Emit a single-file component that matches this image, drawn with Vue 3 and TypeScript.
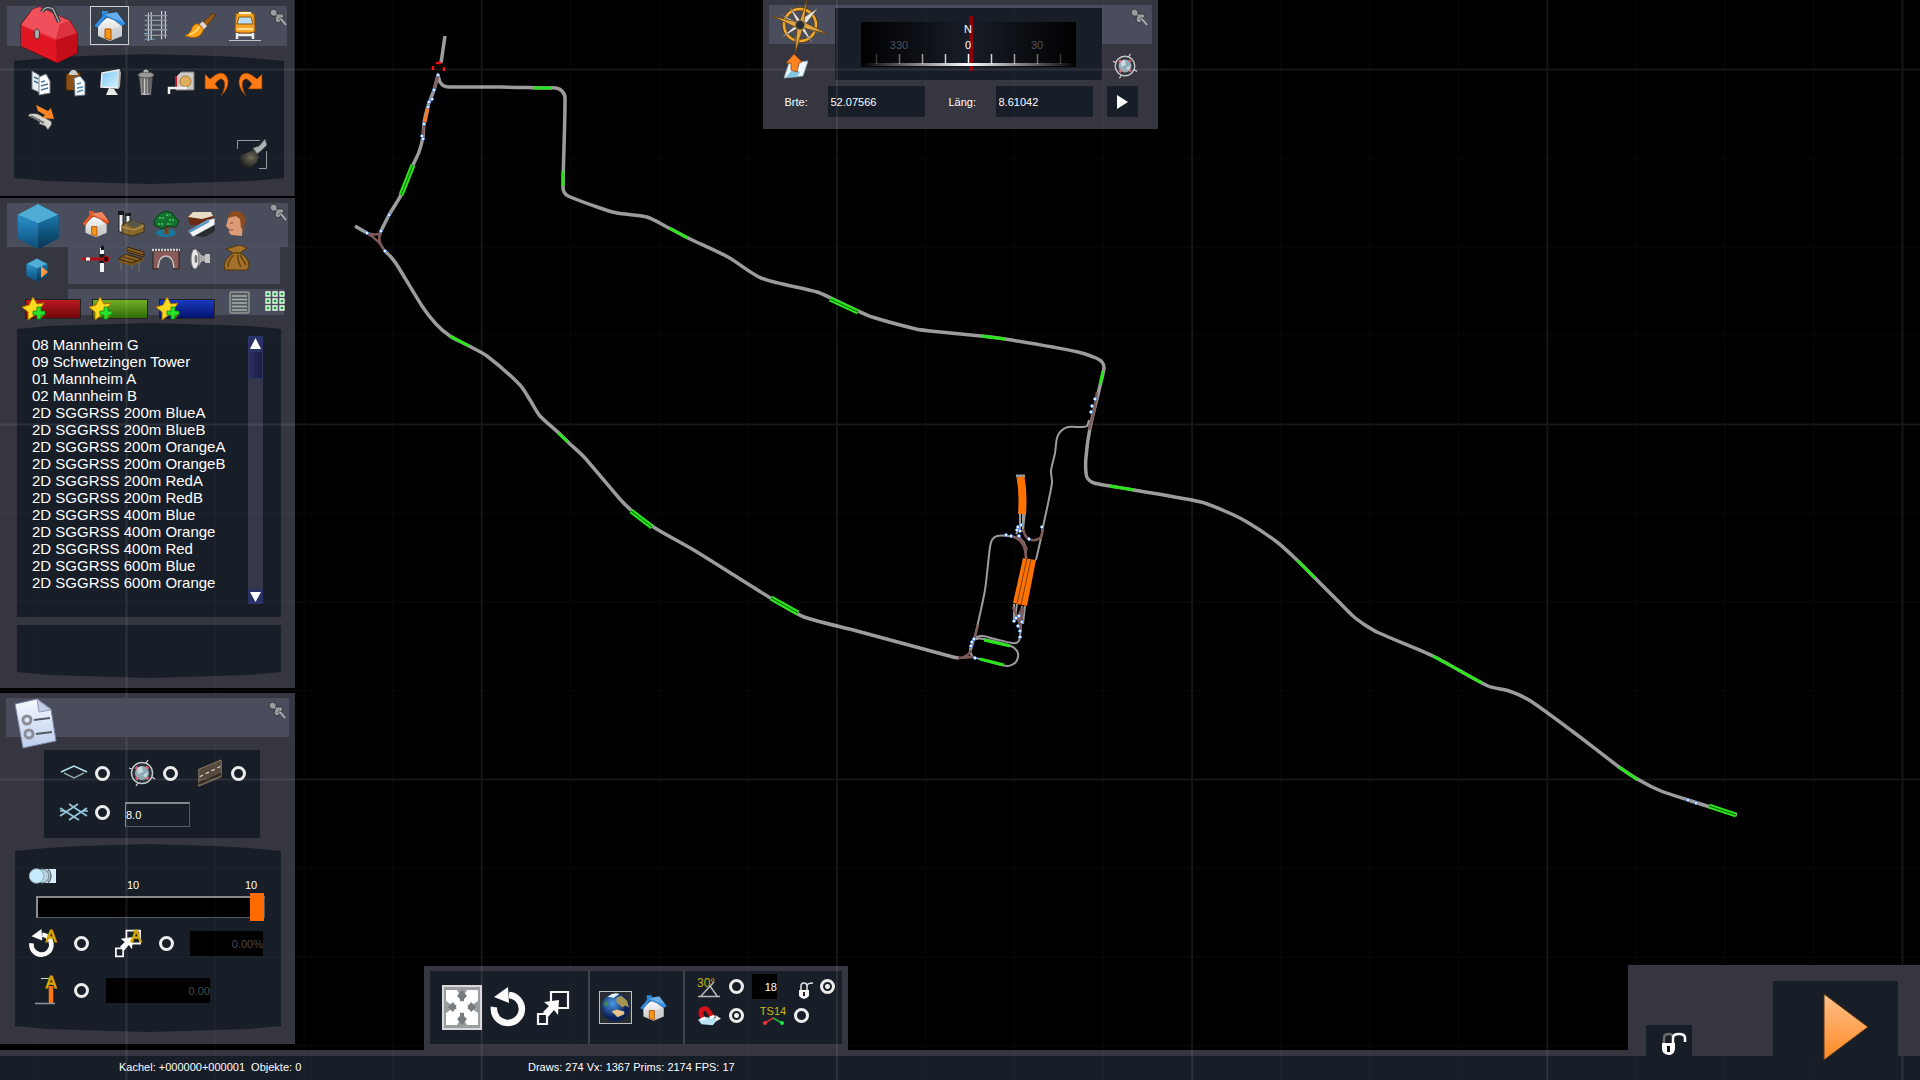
<script setup lang="ts">
import { ref } from 'vue'

type Point = [number, number]
type Tool = { icon: string; label: string; tint?: string }

const modes: Tool[] = [
  { icon: 'house', label: 'Objekte', tint: '#2f8fe6' },
  { icon: 'rails', label: 'Gleise' },
  { icon: 'brush', label: 'Landschaft' },
  { icon: 'train', label: 'Fahrzeuge' },
]

const actions: Tool[] = [
  { icon: 'copy', label: 'Kopieren' },
  { icon: 'paste', label: 'Einfügen' },
  { icon: 'monitor', label: 'Ansicht' },
  { icon: 'trash', label: 'Löschen' },
  { icon: 'tape', label: 'Messen' },
  { icon: 'undo', label: 'Rückgängig' },
  { icon: 'redo', label: 'Wiederholen' },
  { icon: 'shift', label: 'Verschieben' },
]

const categories: Tool[] = [
  { icon: 'house', label: 'Gebäude', tint: '#ea5a26' },
  { icon: 'factory', label: 'Industrie' },
  { icon: 'tree', label: 'Vegetation' },
  { icon: 'road-train', label: 'Verkehr' },
  { icon: 'head', label: 'Personen' },
  { icon: 'signal', label: 'Signale' },
  { icon: 'bench', label: 'Kleinteile' },
  { icon: 'bridge', label: 'Brücken' },
  { icon: 'speaker', label: 'Geräusche' },
  { icon: 'sack', label: 'Güter' },
]

const favourites = [
  { name: 'Rot', tone: 'red' },
  { name: 'Grün', tone: 'green' },
  { name: 'Blau', tone: 'blue' },
]

const objects: string[] = [
  '08 Mannheim G',
  '09 Schwetzingen Tower',
  '01 Mannheim A',
  '02 Mannheim B',
  '2D SGGRSS 200m BlueA',
  '2D SGGRSS 200m BlueB',
  '2D SGGRSS 200m OrangeA',
  '2D SGGRSS 200m OrangeB',
  '2D SGGRSS 200m RedA',
  '2D SGGRSS 200m RedB',
  '2D SGGRSS 400m Blue',
  '2D SGGRSS 400m Orange',
  '2D SGGRSS 400m Red',
  '2D SGGRSS 600m Blue',
  '2D SGGRSS 600m Orange',
]

const density = ref(10)
const latitude = ref('52.07566')
const longitude = ref('8.61042')
const tileSize = ref('8.0')
const scaleJitter = ref('0.00%')
const heightJitter = ref('0.00')
const snapAngle = ref('18')

const ticks = [15, 38, 61, 84, 107, 130, 153, 176, 199]

/* Catmull-Rom interpolation through the surveyed points of a line */
function smooth(p: Point[]): string {
  let d = `M${p[0][0]} ${p[0][1]}`
  for (let i = 0; i < p.length - 1; i++) {
    const a = p[Math.max(0, i - 1)]
    const b = p[i]
    const c = p[i + 1]
    const e = p[Math.min(p.length - 1, i + 2)]
    const len = Math.hypot(c[0] - b[0], c[1] - b[1])
    const l1 = Math.hypot(c[0] - a[0], c[1] - a[1]) || 1
    const l2 = Math.hypot(e[0] - b[0], e[1] - b[1]) || 1
    const k = len / 4
    d += `C${(b[0] + ((c[0] - a[0]) / l1) * k).toFixed(1)} ${(b[1] + ((c[1] - a[1]) / l1) * k).toFixed(1)} ${(c[0] - ((e[0] - b[0]) / l2) * k).toFixed(1)} ${(c[1] - ((e[1] - b[1]) / l2) * k).toFixed(1)} ${c[0]} ${c[1]}`
  }
  return d
}

const mainLines: string[] = [
  smooth([[445, 36], [441, 63]]),
  smooth([[438, 75], [440, 82], [444, 86], [450, 87], [500, 87], [545, 88], [556, 88], [562, 91], [565, 98], [563, 187], [564, 192], [568, 196], [600, 208], [617, 213], [647, 217], [669, 228], [688, 238], [728, 257], [761, 278], [817, 292], [831, 298], [858, 311], [872, 317], [916, 329], [930, 331], [981, 336], [1005, 339], [1078, 352], [1096, 358], [1102, 362], [1104, 368], [1100, 386], [1090, 428], [1086, 457], [1086, 473], [1088, 479], [1094, 483], [1110, 486], [1134, 490], [1201, 502], [1227, 512], [1247, 522], [1277, 542], [1297, 560], [1315, 578], [1340, 603], [1353, 616], [1365, 625], [1379, 633], [1433, 656], [1488, 686], [1509, 691], [1529, 700], [1572, 731], [1619, 767], [1639, 780], [1661, 791], [1688, 800], [1710, 807], [1737, 815]]),
  smooth([[438, 75], [434, 90], [428, 106], [424, 123], [423, 137], [419, 152], [413, 165], [401, 195], [389, 215], [380, 233]]),
  smooth([[355, 226], [367, 233]]),
  smooth([[385, 251], [391, 257], [397, 265], [422, 306], [436, 324], [450, 336], [469, 346], [487, 356], [520, 385], [530, 400], [540, 416], [560, 434], [569, 443], [584, 457], [619, 498], [631, 510], [655, 528], [692, 549], [729, 572], [777, 602], [804, 617], [857, 631], [953, 657], [959, 658]]),
]

const sideLines: string[] = [
  smooth([[1089, 420], [1087, 426], [1082, 427], [1068, 427], [1061, 431], [1057, 438], [1055, 453], [1051, 471], [1052, 483], [1043, 527], [1041, 538], [1036, 560]]),
  smooth([[1026, 558], [1025, 545], [1020, 539], [1008, 536], [997, 536], [992, 540], [990, 547], [985, 590], [978, 623], [974, 640], [971, 650]]),
  smooth([[1021, 624], [1020, 637], [1018, 642], [1012, 643], [995, 639], [983, 636], [977, 637], [971, 642]]),
  smooth([[971, 648], [972, 642], [976, 639], [984, 639], [1011, 646], [1017, 651], [1018, 657], [1015, 663], [1007, 666], [980, 659], [973, 657], [970, 650], [971, 646]]),
  'M1020 512V528L1016 534M1023 512V532M1025 512L1023 530',
  'M1014 604V620M1017 604L1015 618M1022 606L1020 622M1025 606L1023 624',
]

const switchLines: string[] = [
  'M438 76L434 90M424 123L423 137',
  'M367 233Q376 236 381 233M368 234Q379 240 385 251M381 233Q376 240 385 251',
  'M1097 392L1094 412L1089 430',
  smooth([[1043, 528], [1041, 537], [1035, 540], [1029, 539], [1025, 535], [1023, 529]]),
  'M1010 536Q1025 538 1026 557M1017 535Q1023 541 1027 550',
  'M1013 607L1020 624M1023 607L1016 620M1023 608L1020 630',
  'M978 625L974 640M971 650Q968 658 958 658M958 658L973 657',
]

const platforms: string[] = [
  'M533 88H552M563 171V186',
  'M669 228L688 238M981 336L1005 339M1103 371L1100 385',
  'M1110 486L1134 490M1297 560L1315 578M1433 656L1482 683M1619 767L1638 780',
  'M450 336L469 346M558 433L568 442',
  'M984 640L1010 646M980 659L1004 665',
]

/* Passing loops: two parallel platform tracks */
const loops: string[] = ['M413 165L401 195', 'M830 299L858 312', 'M1709 806L1736 815', 'M631 511L652 527', 'M771 598L798 613']

const nodes: Point[] = [
  [438, 75], [434, 90], [432, 99], [429, 102], [428, 107], [424, 124], [422, 136], [423, 139], [389, 215], [381, 231], [367, 233], [385, 251],
  [1095, 399], [1092, 406], [1091, 412], [1042, 527], [1029, 539], [1006, 535], [1011, 536], [1018, 527], [1021, 525], [1017, 530], [1020, 531], [1019, 536],
  [1014, 621], [1016, 618], [1019, 616], [1022, 622], [1018, 626], [1020, 631], [1020, 637], [974, 639], [972, 642], [971, 646], [975, 658], [1688, 800], [1696, 803],
]

function gridPath(first: number, last: number, step: number, vertical: boolean): string {
  let d = ''
  for (let v = first; v < last; v += step) d += vertical ? `M${v} 0V1080` : `M0 ${v}H1920`
  return d
}
const majorGrid = gridPath(126.5, 1920, 355.2, true) + gridPath(69.5, 1080, 355, false)
const minorGrid = gridPath(37.7, 1920, 88.8, true) + gridPath(69.5, 1080, 88.75, false)
</script>

<template>
  <svg class="sprite" aria-hidden="true">
    <defs>
      <linearGradient id="g-red" x1="0" y1="0" x2="1" y2="1"><stop offset="0" stop-color="#ff5a66" /><stop offset="1" stop-color="#c20611" /></linearGradient>
      <linearGradient id="g-cube-l" x1="0" y1="0" x2="0" y2="1"><stop offset="0" stop-color="#2a92cc" /><stop offset="1" stop-color="#0c4c78" /></linearGradient>
      <linearGradient id="g-cube-r" x1="0" y1="0" x2="0" y2="1"><stop offset="0" stop-color="#1a78ae" /><stop offset="1" stop-color="#06324f" /></linearGradient>
      <linearGradient id="g-wall" x1="0" y1="0" x2="0" y2="1"><stop offset="0" stop-color="#fff" /><stop offset="1" stop-color="#c4c4c4" /></linearGradient>
      <linearGradient id="g-play" x1="0" y1="0" x2="0" y2="1"><stop offset="0" stop-color="#ffc08a" /><stop offset="1" stop-color="#ff8a24" /></linearGradient>
      <linearGradient id="g-steel" x1="0" y1="0" x2="1" y2="0"><stop offset="0" stop-color="#555" /><stop offset=".4" stop-color="#ccc" /><stop offset="1" stop-color="#444" /></linearGradient>
      <linearGradient id="g-sky" x1="0" y1="0" x2="1" y2="1"><stop offset="0" stop-color="#7cc8f4" /><stop offset="1" stop-color="#d4f2ff" /></linearGradient>
      <linearGradient id="g-doc" x1="0" y1="0" x2="0" y2="1"><stop offset="0" stop-color="#f6f9ff" /><stop offset="1" stop-color="#bccdee" /></linearGradient>
      <radialGradient id="g-earth" cx=".4" cy=".35"><stop offset="0" stop-color="#4d9ae8" /><stop offset="1" stop-color="#0c2258" /></radialGradient>
      <radialGradient id="g-beam" cx=".6" cy=".4" r=".6"><stop offset="0" stop-color="#6d6955" /><stop offset="1" stop-color="#1b1d1f" /></radialGradient>
    </defs>

    <symbol id="toolbox" viewBox="0 0 58 60">
      <path d="M1 19 13 4 20 2 50 16 57 28V48L37 58 1 41Z" fill="url(#g-red)" stroke="#5d060b" />
      <path d="M13 4 20 2 50 16 40 19 36 34 2 19Z" fill="#f0505c" />
      <path d="M36 35 57 28V48L37 58Z" fill="#c30d18" /><path d="M1 20 36 36V57L1 41Z" fill="#e01722" />
      <path d="M36 35 43 18 50 16 57 28Z" fill="#db3340" />
      <path d="M22 7Q25 0 33 4L39 17" fill="none" stroke="#30363c" stroke-width="4" /><path d="M22 7Q25 0 33 4L39 17" fill="none" stroke="#9aa4a8" stroke-width="1.5" />
      <ellipse cx="17" cy="29" rx="2.5" ry="5" fill="#a9b0b4" stroke="#5a2b2f" />
    </symbol>
    <symbol id="house" viewBox="0 0 32 32">
      <path d="M4 15 15 6 28 14V26L16 31 4 26Z" fill="url(#g-wall)" /><path d="M16 20 28 15V26L16 31Z" fill="#c9c9c9" opacity=".6" />
      <path d="M8 1H14V8H8Z" fill="currentColor" /><path d="M0 16 10 4 23 2 32 14 28 16 20 10 12 7 3 18Z" fill="currentColor" stroke="#0004" />
      <path d="M10 4 23 2 30 12 18 8Z" fill="#fff4" /><path d="M11 19H17V30L11 28Z" fill="#f79518" stroke="#a65506" />
    </symbol>
    <symbol id="rails" viewBox="0 0 32 34">
      <path d="M9 3V33M12 2V32M23 1V31M27 1V30" stroke="#cfd5da" stroke-width="1.2" /><path d="M5 6H29M5 11H29M5 16H29M5 21H29M5 27H29" stroke="#8d979e" stroke-width="1.400" /><path d="M5 31H16M4 25H10" stroke="#7caac0" />
    </symbol>
    <symbol id="brush" viewBox="0 0 36 30">
      <path d="M20 12 32 1 35 3 25 16Z" fill="#9a5a16" stroke="#59310a" /><path d="M17 13 21 10 26 15 22 19Z" fill="#d9d9d9" /><path d="M1 26Q9 22 9 17Q13 10 18 14L22 19Q19 28 11 28Q5 28 1 26Z" fill="#ffa318" stroke="#a45b04" /><path d="M6 25Q14 22 17 16" stroke="#ffe17a" stroke-width="2" fill="none" />
    </symbol>
    <symbol id="train" viewBox="0 0 32 32">
      <path d="M7 4Q16-1 25 4L26 21Q25 23 16 23Q7 23 6 21Z" fill="#f7a325" stroke="#a35c05" /><path d="M10 7H22L24 14H8Z" fill="#b9def5" stroke="#85580e" /><path d="M10 3H22" stroke="#fff3d0" stroke-width="2" /><path d="M8 19H24" stroke="#ffe19e" stroke-width="2" />
      <path d="M8 23V29M24 23V29M8 25H24" stroke="#eee" stroke-width="2.500" /><path d="M0 30.500H32" stroke="#c0c4c8" />
    </symbol>
    <symbol id="pin" viewBox="0 0 18 18"><path d="M1 5Q1 1 5 1L8 3 8 6 14 6 15 9 13 10 11 14 8 15 6 12 7 8 3 8Z" fill="#9a9c9f" stroke="#2b2c30" stroke-width=".8" /><path d="M8 6 7 9M12 9 9 12" stroke="#5b5d62" /><path d="M12 11 17 17" stroke="#b4b4b4" stroke-width="1.800" /></symbol>
    <symbol id="copy" viewBox="0 0 28 28"><path d="M5 2 12 6 14 24 5 20Z" fill="#e9eff3" stroke="#748089" /><path d="M12 8 19 5 23 12V24L12 26Z" fill="#fff" stroke="#748089" /><path d="M7 8 11 10M7 12 11 14M14 13 18 12M14 17 21 15M14 21 21 19" stroke="#47769a" stroke-width="1.5" /></symbol>
    <symbol id="paste" viewBox="0 0 28 28"><path d="M4 5 18 3V22L4 21Z" fill="#8a4f14" stroke="#3f2206" /><path d="M7 4Q11-2 15 3L16 6H7Z" fill="#ccc" /><path d="M12 9 18 7 23 13V26L13 27Z" fill="#f8fcff" stroke="#64727b" /><path d="M15 15 19 14M15 19 21 18M15 23 21 21" stroke="#5a8cb0" stroke-width="1.500" /></symbol>
    <symbol id="monitor" viewBox="0 0 28 28"><path d="M5 4 22 1 21 19 4 18Z" fill="url(#g-sky)" stroke="#f0f0f0" stroke-width="1.5" /><path d="M22 1 24 3 23 18 21 20Z" fill="#aaa" /><path d="M12 19 17 20 21 26H9Z" fill="#e8e8e8" /></symbol>
    <symbol id="trash" viewBox="0 0 28 28"><path d="M7 7H21L19 26H9Z" fill="url(#g-steel)" /><path d="M11 9V24M14 9V25M17 9V24" stroke="#3c3c3c" /><ellipse cx="14" cy="6" rx="8" ry="3" fill="#999" stroke="#4b4b4b" /><path d="M12 3Q14 0 16 3" stroke="#bbb" stroke-width="2" fill="none" /></symbol>
    <symbol id="tape" viewBox="0 0 28 28"><path d="M9 8 14 3H27V21H9Z" fill="#cbcac6" stroke="#777" /><circle cx="18.500" cy="12.500" r="5.500" fill="#dcae5e" stroke="#a97a32" /><path d="M9 7V19" stroke="#c41724" stroke-width="2" /><path d="M2 25V19H20" fill="none" stroke="#eee" stroke-width="2.500" /></symbol>
    <symbol id="undo" viewBox="0 0 28 28"><path d="M3 5V20H17L13 15Q19 7 22 12Q24 18 19 27Q29 17 25 8Q20-1 8 10Z" fill="#ff7b16" stroke="#7b3504" stroke-width=".7" /></symbol>
    <symbol id="redo" viewBox="0 0 28 28"><path d="M25 5V20H11L15 15Q9 7 6 12Q4 18 9 27Q-1 17 3 8Q8-1 20 10Z" fill="#ff7b16" stroke="#7b3504" stroke-width=".7" /></symbol>
    <symbol id="shift" viewBox="0 0 28 28"><path d="M1 12Q2 8 11 10L24 17 25 20 21 26 18 22 12 20 13 16 4 13Z" fill="#d5d5d0" stroke="#44443f" /><path d="M4 12 17 19" stroke="#777" stroke-width="2" /><path d="M9 1 21 7 24 4 27 15 15 14 18 11 11 7Z" fill="#ff8424" /></symbol>
    <symbol id="torch" viewBox="0 0 30 30"><path d="M2 17Q9 14 17 11L22 18Q20 26 12 29Q2 32 2 20Z" fill="url(#g-beam)" /><path d="M16 9 22 7 28 0 30 6 25 11 20 15Z" fill="#adb3b5" stroke="#4f5557" /><path d="M.5 10V1.500H23M29.500 12V29.500H22" fill="none" stroke="#939aa0" /></symbol>

    <symbol id="cube" viewBox="0 0 44 48"><path d="M22 1 43 12V36L22 47 1 36V12Z" fill="#0a436c" /><path d="M22 1 43 12 22 21 1 12Z" fill="#4fadd5" /><path d="M1 12 22 21V47L1 36Z" fill="url(#g-cube-l)" /><path d="M43 12 22 21V47L43 36Z" fill="url(#g-cube-r)" /></symbol>
    <symbol id="factory" viewBox="0 0 28 28"><path d="M2 2H6V22H2ZM9 4H13V16H9Z" fill="#eee" stroke="#222" /><path d="M1 1H7V5H1ZM8 3H14V6H8Z" fill="#15171b" /><path d="M5 15 15 10 27 14V22L15 26 5 23Z" fill="#86672c" stroke="#403010" /><path d="M9 14 16 10 25 14 17 18Z" fill="#56554b" /><path d="M5 17 17 20 27 16" stroke="#c29c54" fill="none" /></symbol>
    <symbol id="tree" viewBox="0 0 28 28"><ellipse cx="14" cy="23" rx="10" ry="4" fill="#157a9c" /><path d="M13 14H16L17 24H12Z" fill="#70431a" /><path d="M14 1 20 3 23 7 27 11 24 17 16 16 10 19 2 15 3 9 7 4Z" fill="#14722e" stroke="#073c16" /><path d="M7 8H12M14 5H18M17 10H22M6 14H11M15 14H19" stroke="#3fb558" stroke-width="2" stroke-dasharray="2 1" /></symbol>
    <symbol id="road-train" viewBox="0 0 28 28"><path d="M1 7 6 2H24L27 9 20 15H3Z" fill="#6a2a12" /><path d="M1 7 6 2H24L26 6 15 9Z" fill="#e8ddc4" /><path d="M1 21 20 10 28 8V15L6 27Z" fill="#f2f2f2" stroke="#667" /><path d="M2 22 22 11" stroke="#4994c5" stroke-width="2" /><path d="M8 26 28 15V21L18 27Z" fill="#2a2c30" /></symbol>
    <symbol id="head" viewBox="0 0 28 28"><path d="M6 9Q7 3 14 3Q22 4 21 14L20 26 10 25Q6 24 7 19L4 16Z" fill="#dd9a76" /><path d="M6 8Q6 1 14 1Q24 1 23 13L21 20 19 18 18 9 14 6Z" fill="#8a4c20" /><path d="M7 20H11M8 13H11" stroke="#8b4931" /></symbol>
    <symbol id="signal" viewBox="0 0 28 28"><path d="M20 3V27" stroke="#f1f1f1" stroke-width="4" /><path d="M20 9V18" stroke="#181818" stroke-width="5" /><path d="M0 14H23" stroke="#b31016" stroke-width="3" /><path d="M4 14H8" stroke="#fff" stroke-width="3" /><circle cx="24" cy="14" r="3" fill="#300" stroke="#c11" /><path d="M19 1H22V5H19Z" fill="#111" /></symbol>
    <symbol id="bench" viewBox="0 0 28 28"><path d="M3 15 15 18 27 12V15L15 21 1 17Z" fill="#7e5518" /><path d="M10 2 27 7V12L10 7ZM8 9 25 14 15 18 2 14Z" fill="#8b6122" stroke="#38230a" /><path d="M4 18V25M22 17V27M15 20V24" stroke="#666" stroke-width="1.500" /><path d="M10 5 27 10M6 12 20 16" stroke="#3c260c" /></symbol>
    <symbol id="bridge" viewBox="0 0 28 28"><path d="M1 6H27V24H22Q21 11 14 11Q7 11 6 24H1Z" fill="#8a5a58" stroke="#2b2021" /><path d="M0 5H28" stroke="#ccc" stroke-width="2.500" stroke-dasharray="2 1" /><path d="M6 23Q7 11 14 11Q21 11 22 23" stroke="#c9c3c1" stroke-width="1.500" fill="none" /></symbol>
    <symbol id="speaker" viewBox="0 0 28 28"><path d="M5 4Q12 4 15 10H22V17H15Q12 23 5 24Z" fill="#a9a9a9" stroke="#353535" /><ellipse cx="8" cy="14" rx="4" ry="10" fill="#e6e6e6" stroke="#777" /><ellipse cx="9" cy="14" rx="1.500" ry="4" fill="#777" /><path d="M18 9H23V18H18Z" fill="#c2c2c2" /></symbol>
    <symbol id="sack" viewBox="0 0 28 28"><path d="M10 7 4 4 14 1 18 0 25 3 18 8Q27 13 27 21L25 25H3Q0 16 10 9Z" fill="#a4712a" stroke="#533509" /><path d="M9 8H19M12 10Q6 15 6 22M16 10Q15 15 19 22M18 10 24 20" stroke="#62410f" stroke-width="1.500" fill="none" /></symbol>
    <symbol id="star-plus" viewBox="0 0 24 24"><path d="M11 0 15 7 22 6 18 12 21 20 13 18 6 23 6 15 0 10 7 8Z" fill="#ffd91e" stroke="#a97300" /><path d="M15 10H19V14H23V18H19V22H15V18H11V14H15Z" fill="#29e42c" stroke="#07800c" stroke-width=".8" /></symbol>
    <symbol id="rows" viewBox="0 0 22 24"><rect x="1" y="1" width="19" height="21" rx="1.500" fill="#545c5d" stroke="#8f9694" stroke-width="1.500" /><path d="M3 5H18M3 8.500H18M3 12H18M3 15.500H18M3 19H18" stroke="#a9afad" stroke-width="1.300" /></symbol>
    <symbol id="tiles" viewBox="0 0 20 20"><g fill="#159f3f" stroke="#e7ffe9" stroke-width="1.300"><path d="M1 1H5V5H1ZM8 1H12V5H8ZM15 1H19V5H15ZM1 8H5V12H1ZM8 8H12V12H8ZM15 8H19V12H15ZM1 15H5V19H1ZM8 15H12V19H8ZM15 15H19V19H15Z" /></g></symbol>

    <symbol id="document" viewBox="0 0 44 52"><path d="M1 6 23 1 37 11 42 43 9 50Z" fill="url(#g-doc)" stroke="#78839e" /><path d="M23 1 25 14 37 12Z" fill="#c4cde2" stroke="#929cb4" /><g fill="none" stroke="#8b8e96" stroke-width="3"><circle cx="13" cy="22" r="4" /><circle cx="15" cy="36" r="4" /></g><path d="M20 22 36 20M22 36 38 34" stroke="#555962" stroke-width="2" /></symbol>
    <symbol id="plane" viewBox="0 0 30 22"><path d="M2 10 15 4 28 10" fill="none" stroke="#b9e6f4" stroke-width="1.500" /><path d="M5 11 15 16 25 11" fill="none" stroke="#8aa1a8" stroke-width="1.500" /></symbol>
    <symbol id="mesh" viewBox="0 0 30 22"><path d="M1 15 19 3M10 19 28 7M10 3 28 15M1 7 20 19M1 10H7M23 10H29" fill="none" stroke="#95c9dc" stroke-width="1.600" /></symbol>
    <symbol id="globe-target" viewBox="0 0 28 28"><circle cx="14" cy="14" r="8" fill="#8fa9b4" /><path d="M9 9 14 7 15 13 10 15ZM15 16 20 13 18 19Z" fill="#c6d9df" /><g fill="none"><circle cx="14" cy="14" r="10.500" stroke="#c4c7c9" stroke-width="1.500" /><circle cx="14" cy="14" r="8" stroke="#33363c" stroke-width="2" /><circle cx="14" cy="14" r="7.500" stroke="#e06170" stroke-width="2.500" stroke-dasharray="3 8.800" stroke-dashoffset="-4" /><path d="M18 4 20 1M4 10 1 9M10 24 8 27M24 18 27 20" stroke="#d1d4d6" stroke-width="1.300" /></g></symbol>
    <symbol id="road" viewBox="0 0 28 30"><path d="M2 11 26 1V19L2 29Z" fill="#55493d" stroke="#8f8068" /><path d="M3 19 25 8" stroke="#dad3c5" stroke-width="1.300" stroke-dasharray="4 3" /><path d="M2 26 26 16" stroke="#2b251f" stroke-width="2" /></symbol>
    <symbol id="motion" viewBox="0 0 28 16"><path d="M12 1H27V15H12Z" fill="#d5eef9" /><path d="M19 1Q25 8 19 15" stroke="#65737b" fill="none" stroke-width="1.500" /><circle cx="13" cy="8" r="7" fill="#b7d2de" stroke="#5f7078" /><circle cx="7.500" cy="8" r="7.200" fill="#c7ebfc" stroke="#90b2c0" /></symbol>
    <symbol id="rotate" viewBox="0 0 36 42"><path d="M4 20A14 14 0 1 0 19 8" fill="none" stroke="#fafafa" stroke-width="6.500" /><path d="M4 10 18 0 19 16Z" fill="#fafafa" /></symbol>
    <symbol id="scale" viewBox="0 0 34 36"><g fill="none" stroke="#f4f4f4" stroke-width="2.200"><path d="M15 2H32V18H15Z" /><path d="M2 24H11V34H2Z" /></g><path d="M8 12 23 10 22 25 18 20 12 27 7 22 13 16Z" fill="#fff" /></symbol>
    <symbol id="height" viewBox="0 0 29 29"><path d="M18 10V27" stroke="#ff7613" stroke-width="4.500" /><path d="M2 27.500H22" stroke="#8b9399" stroke-width="1.500" /><path d="M8 2.500H16" stroke="#d4d4d4" /></symbol>
    <symbol id="move" viewBox="0 0 40 45"><path d="M1 1H39V44H1Z" fill="#999da0" stroke="#d9d9d9" stroke-width="2" /><path d="M4 5H15L20 14 25 5H36V16L27 22 36 28V40H25L20 31 15 40H4V28L13 22 4 16Z" fill="#fff" /><path d="M20 5 25 11 22 14V19L27 20 29 17 34 22 29 27 27 24 22 25V31L25 34 20 40 15 34 18 31V25L13 24 11 27 6 22 11 17 13 20 18 19V14L15 11Z" fill="#777b7e" /><circle cx="20" cy="22" r="6" fill="#fff" /></symbol>
    <symbol id="earth" viewBox="0 0 34 34"><rect x=".5" y=".5" width="33" height="33" fill="#292c31" stroke="#c5c5c5" /><circle cx="17" cy="17" r="14.500" fill="url(#g-earth)" /><path d="M18 7 23 5 29 10 31 17 27 15 24 17 20 13 18 12Z" fill="#a69451" /><path d="M13 21 18 19 26 21 26 24 19 27 16 24Z" fill="#e5c38b" /><path d="M9 6Q15 1 21 3L15 7Z" fill="#e9f5ff" /><path d="M5 12 9 10 10 13 7 17Z" fill="#488454" /></symbol>
    <symbol id="padlock" viewBox="0 0 16 18"><path d="M3 9V4Q3 1 6 1Q9 1 9 4V9M9 4Q9 1 15 1" fill="none" stroke="#ddd" stroke-width="1.600" /><path d="M1 8H11V14Q6 20 1 14Z" fill="#f4f4f4" /><path d="M6 10V14" stroke="#222" stroke-width="2" /></symbol>
    <symbol id="magnet" viewBox="0 0 26 22"><path d="M1 15 9 12 23 14 17 21 5 20Z" fill="#b9e2f5" /><path d="M6 13 4 8Q4 3 9 3Q12 3 16 12" fill="none" stroke="#d21118" stroke-width="5" /><path d="M14 13 19 11M4 15 9 13" stroke="#fff" stroke-width="3" /><path d="M20 10 26 14 20 17Z" fill="#eee" /></symbol>
    <symbol id="unlocked" viewBox="0 0 26 24"><path d="M3 12V6Q3 2 8 2Q12 2 12 6" fill="none" stroke="#6a6a6a" stroke-width="2.500" /><path d="M12 12V6Q12 2 18 2Q24 2 24 6V10" fill="none" stroke="#fff" stroke-width="2.500" /><path d="M1 11H14V17Q13 23 7.500 23Q1 22 1 17Z" fill="#fff" /><path d="M7.500 14V20" stroke="#111" stroke-width="3" /></symbol>
    <symbol id="play" viewBox="0 0 46 68"><path d="M1 1 45 34 1 67Z" fill="url(#g-play)" stroke="#5a3312" /></symbol>
    <symbol id="compass" viewBox="0 0 58 56">
      <circle cx="29" cy="25" r="16" fill="none" stroke="#5a3d08" stroke-width="4" /><circle cx="29" cy="25" r="16" fill="none" stroke="#efa832" stroke-width="2.500" />
      <path d="M29 20 18 6 26 22 9 14 25 25 10 38 27 28 23 43 30 29 42 44 33 27 48 34 34 25 47 8Z" fill="#e7e4dc" stroke="#4b473f" stroke-width=".6" /><path d="M29 20 36-1 33 22 57 34 32 28 24 54 26 28 1 16 26 22Z" fill="#dfa544" stroke="#5d3c0d" stroke-width=".8" /><circle cx="29" cy="25" r="4.500" fill="#282c32" stroke="#83754e" />
    </symbol>
    <symbol id="drop-map" viewBox="0 0 26 26"><path d="M6 9 25 7 20 22 1 24Z" fill="#edf7fb" stroke="#8ca2aa" /><path d="M10 15 17 18 14 23H3Z" fill="#83c5e7" /><path d="M11 0 19 8 16 9 14 18 8 16V9H3Z" fill="#ff821e" stroke="#934106" stroke-width=".8" /></symbol>
  </svg>

  <div class="editor">
    <svg class="map" viewBox="0 0 1920 1080" preserveAspectRatio="xMidYMid slice" role="img" aria-label="Streckenkarte">
      <g fill="none" stroke="#9c9c9c">
        <path v-for="d in mainLines" :key="d" :d="d" stroke-width="3.500" />
        <path v-for="d in sideLines" :key="d" :d="d" stroke-width="2" />
      </g>
      <g fill="none" stroke="#7d5a58" stroke-width="2.500"><path v-for="d in switchLines" :key="d" :d="d" /></g>
      <g fill="none" stroke="#29e51a" stroke-width="3"><path v-for="d in platforms" :key="d" :d="d" /></g>
      <g fill="none">
        <path v-for="d in loops" :key="`o${d}`" :d="d" stroke="#29e51a" stroke-width="5" />
        <path v-for="d in loops" :key="`i${d}`" :d="d" stroke="#0c5a0a" stroke-width="1" />
      </g>
      <path d="M1016 476H1025" stroke="#999" stroke-width="3" />
      <path d="M1020.500 477Q1023.500 493 1022 514" fill="none" stroke="#ff7200" stroke-width="8" />
      <path d="M428 107 425 122" stroke="#f47b2a" stroke-width="3.500" />
      <path d="M1023 558 1036 560 1027 606 1013 603Z" fill="#ff7200" /><path d="M1027 558 1017 604M1031 559 1021 605" stroke="#7c3e12" />
      <g fill="#e4eeff" stroke="#5a8bd8"><path v-for="(n, i) in nodes" :key="i" :d="`M${n[0]} ${n[1] - 2}l2 2-2 2-2-2Z`" /></g>
      <path d="M436 63H441M433 66V70M444 67V71" stroke="#ef0b12" stroke-width="2.500" />
    </svg>

    <div class="workspace">
      <aside class="sidebar">
        <section class="panel tools">
          <header class="caption">
            <svg class="toolbox"><use href="#toolbox" /></svg>
            <nav class="modes">
              <button v-for="(m, i) in modes" :key="m.icon" type="button" :aria-label="m.label" :class="{ selected: i === 0 }">
                <svg class="icon mode-icon" :style="{ color: m.tint }"><use :href="`#${m.icon}`" /></svg>
              </button>
            </nav>
            <button type="button" class="pin" aria-label="Anheften"><svg><use href="#pin" /></svg></button>
          </header>
          <div class="well rounded-both tool-well">
            <div class="icon-grid seven">
              <button v-for="a in actions" :key="a.icon" type="button" :aria-label="a.label"><svg class="icon"><use :href="`#${a.icon}`" /></svg></button>
            </div>
            <button type="button" class="torch" aria-label="Beleuchtung"><svg><use href="#torch" /></svg></button>
          </div>
        </section>

        <section class="panel library">
          <header class="library-head">
            <div class="library-top">
              <div class="cubes">
                <svg class="cube"><use href="#cube" /></svg>
                <button type="button" class="mini-cube" aria-label="Auswahl">
                  <svg viewBox="0 0 24 24"><use href="#cube" width="22" height="24" /><path d="M15 8 22 14 15 20Z" fill="#ff9640" /></svg>
                </button>
              </div>
              <div class="icon-grid five">
                <button v-for="c in categories" :key="c.label" type="button" :aria-label="c.label"><svg class="icon" :style="{ color: c.tint }"><use :href="`#${c.icon}`" /></svg></button>
              </div>
              <button type="button" class="pin" aria-label="Anheften"><svg><use href="#pin" /></svg></button>
            </div>
            <div class="filters">
              <button v-for="f in favourites" :key="f.tone" type="button" class="favourite" :class="f.tone" :aria-label="`Favoriten ${f.name}`"><svg><use href="#star-plus" /></svg></button>
              <button type="button" class="view rows" aria-label="Liste"><svg><use href="#rows" /></svg></button>
              <button type="button" class="view" aria-label="Kacheln"><svg><use href="#tiles" /></svg></button>
            </div>
          </header>
          <div class="well rounded-top list-well">
            <ul class="objects"><li v-for="o in objects" :key="o">{{ o }}</li></ul>
            <div class="scroller">
              <button type="button" aria-label="Nach oben"><svg viewBox="0 0 15 15"><path d="M7.500 2 13 13H2Z" fill="#fff" /></svg></button>
              <div class="thumb"></div>
              <button type="button" aria-label="Nach unten"><svg viewBox="0 0 15 15"><path d="M7.500 13 13 3H2Z" fill="#fff" /></svg></button>
            </div>
          </div>
          <div class="well rounded-bottom preview-well"></div>
        </section>

        <section class="panel options">
          <header class="caption">
            <svg class="document"><use href="#document" /></svg>
            <button type="button" class="pin" aria-label="Anheften"><svg><use href="#pin" /></svg></button>
          </header>
          <div class="well surface-well">
            <div class="option-row">
              <label class="option"><svg class="wide"><use href="#plane" /></svg><input type="radio" name="plane" aria-label="Ebene" /></label>
              <label class="option"><svg class="wide"><use href="#globe-target" /></svg><input type="radio" name="globe" aria-label="Globus" /></label>
              <label class="option"><svg class="wide"><use href="#road" /></svg><input type="radio" name="road" aria-label="Straße" /></label>
            </div>
            <div class="option-row second">
              <label class="option"><svg class="wide"><use href="#mesh" /></svg><input type="radio" name="mesh" aria-label="Raster" /></label>
              <input v-model="tileSize" class="size-field" type="text" aria-label="Rastergröße" />
            </div>
          </div>
          <div class="well rounded-both spread-well">
            <div class="scale-labels"><svg><use href="#motion" /></svg><output>{{ density }}</output><output>10</output></div>
            <input v-model="density" class="slider" type="range" min="0" max="10" aria-label="Dichte" />
            <div class="jitter">
              <label class="option loose"><svg class="combo" viewBox="0 0 29 29"><use href="#rotate" width="27" height="30" x="-1" /><text x="22" y="13" class="auto">A</text></svg><input type="radio" name="rot" aria-label="Zufällige Drehung" /></label>
              <label class="option loose"><svg class="combo" viewBox="0 0 29 29"><use href="#scale" width="28" height="29" /><text x="22" y="13" class="auto">A</text></svg><input type="radio" name="scl" aria-label="Zufällige Größe" /></label>
              <input v-model="scaleJitter" class="number percent" type="text" aria-label="Größenabweichung" />
            </div>
            <div class="jitter lower">
              <label class="option loose"><svg class="combo" viewBox="0 0 29 29"><use href="#height" width="29" height="29" x="4" /><text x="22" y="12" class="auto">A</text></svg><input type="radio" name="hgt" aria-label="Zufällige Höhe" /></label>
              <input v-model="heightJitter" class="number metres" type="text" aria-label="Höhenabweichung" />
            </div>
          </div>
        </section>
      </aside>

      <section class="panel navigator">
        <div class="nav-top">
          <div class="nav-icons">
            <svg class="compass"><use href="#compass" /></svg>
            <button type="button" aria-label="Zur Karte"><svg class="drop"><use href="#drop-map" /></svg></button>
          </div>
          <div class="well dial">
            <svg viewBox="0 0 215 56" class="dial-face">
              <defs>
                <linearGradient id="dial-bg"><stop offset="0" /><stop offset=".5" stop-color="#171d27" /><stop offset="1" /></linearGradient>
                <linearGradient id="dial-line"><stop offset="0" stop-color="#000" /><stop offset=".5" stop-color="#fff" /><stop offset="1" stop-color="#000" /></linearGradient>
              </defs>
              <rect y="6" width="215" height="45" fill="url(#dial-bg)" />
              <rect x="108" width="4" height="55" fill="#8c0008" />
              <rect y="47" width="215" height="3" fill="url(#dial-line)" />
              <path v-for="t in ticks" :key="t" :d="`M${t + 0.5} 38V48`" stroke="#fff" stroke-width="1.500" :opacity="1 - Math.abs(t - 107) / 115" />
              <g text-anchor="middle" font-family="Liberation Sans, sans-serif" font-size="11">
                <text x="107" y="17" fill="#fff">N</text><text x="107" y="33" fill="#fff">0</text>
                <text x="38" y="33" fill="#50545a">330</text><text x="176" y="33" fill="#50545a">30</text>
              </g>
            </svg>
          </div>
          <div class="nav-right">
            <button type="button" class="pin" aria-label="Anheften"><svg><use href="#pin" /></svg></button>
            <button type="button" class="locate" aria-label="Position"><svg><use href="#globe-target" /></svg></button>
          </div>
        </div>
        <form class="coordinates" @submit.prevent>
          <label for="lat">Brte:</label><input id="lat" v-model="latitude" type="text" />
          <label for="lon" class="lon">Läng:</label><input id="lon" v-model="longitude" type="text" />
          <button type="submit" aria-label="Los"><svg viewBox="0 0 12 16"><path d="M1 1 12 8 1 15Z" fill="#fff" /></svg></button>
        </form>
      </section>

      <div class="dock">
        <section class="toolbar">
          <div class="group transforms">
            <button type="button" aria-label="Bewegen"><svg class="t-move"><use href="#move" /></svg></button>
            <button type="button" aria-label="Drehen"><svg class="t-rotate"><use href="#rotate" /></svg></button>
            <button type="button" aria-label="Skalieren"><svg class="t-scale"><use href="#scale" /></svg></button>
          </div>
          <div class="group spaces">
            <button type="button" aria-label="Welt"><svg class="t-earth"><use href="#earth" /></svg></button>
            <button type="button" aria-label="Lokal"><svg class="t-house"><use href="#house" /></svg></button>
          </div>
          <div class="group snaps">
            <div class="snap-row">
              <label class="snap"><svg viewBox="0 0 24 22"><path d="M17 6 4 20M13 10 20 20M1 20.500H23" stroke="#bab9b9" stroke-width="1.500" /><text x="0" y="11" class="degrees">30°</text></svg><input type="radio" name="angle" aria-label="Winkelraster" /></label>
              <input v-model="snapAngle" class="angle-field" type="text" aria-label="Winkel" />
              <label class="snap lock"><svg><use href="#padlock" /></svg><input type="radio" name="lock" checked aria-label="Sperre" /></label>
            </div>
            <div class="snap-row">
              <label class="snap"><svg><use href="#magnet" /></svg><input type="radio" name="magnet" checked aria-label="Einrasten" /></label>
              <label class="snap ts"><svg viewBox="0 0 24 22"><path d="M3 18 11 13" stroke="#d02d31" stroke-width="1.500" /><path d="M11 13 20 18" stroke="#22b942" stroke-width="1.500" /><circle cx="3" cy="18" r="2" fill="#f0343a" /><circle cx="20" cy="18" r="2" fill="#22e54d" /><text x="11" y="10" text-anchor="middle" class="version">TS14</text></svg><input type="radio" name="ts" aria-label="TS14" /></label>
            </div>
          </div>
        </section>
        <section class="run">
          <button type="button" class="unlock" aria-label="Entsperrt"><svg><use href="#unlocked" /></svg></button>
          <button type="button" class="start" aria-label="Starten"><svg><use href="#play" /></svg></button>
        </section>
      </div>
    </div>

    <footer class="status"><span class="tile">Kachel: +000000+000001&nbsp; Objekte: 0</span><span>Draws: 274 Vx: 1367 Prims: 2174 FPS: 17</span></footer>

    <svg class="grid" viewBox="0 0 1920 1080" preserveAspectRatio="xMidYMid slice" aria-hidden="true">
      <path :d="minorGrid" stroke="#fff" stroke-opacity=".02" stroke-width="2" /><path :d="majorGrid" stroke="#fff" stroke-opacity=".07" stroke-width="2" />
    </svg>
  </div>
</template>

<style>
body { margin: 0; background: #000; }
</style>

<style scoped>
.sprite { position: absolute; width: 0; height: 0; }
.editor { position: relative; display: flex; flex-direction: column; min-height: 100vh; background: #000; color: #fff; font: 11px/14px "Liberation Sans", Arial, sans-serif; overflow: hidden; }
.editor *, .editor *::before { box-sizing: border-box; }
svg { display: block; overflow: visible; }
button { display: flex; align-items: center; justify-content: center; padding: 0; border: 0; background: none; color: inherit; cursor: pointer; }
input { margin: 0; font: inherit; color: inherit; }
.map, .grid { position: absolute; inset: 0; width: 100%; height: 100%; pointer-events: none; }
.workspace { position: relative; flex: 1; display: flex; }
.sidebar { display: flex; flex-direction: column; width: 295px; flex: none; }
.panel { background: #35363f; }
.well { background: #181e28; }
.rounded-both { clip-path: polygon(0 7px, 12% 4px, 25% 2px, 38% 1px, 50% 0, 62% 1px, 75% 2px, 88% 4px, 100% 7px, 100% calc(100% - 6px), 88% calc(100% - 3px), 75% calc(100% - 2px), 50% 100%, 25% calc(100% - 2px), 12% calc(100% - 3px), 0 calc(100% - 6px)); }
.rounded-top { clip-path: polygon(0 6px, 12% 3px, 25% 2px, 50% 0, 75% 2px, 88% 3px, 100% 6px, 100% 100%, 0 100%); }
.rounded-bottom { clip-path: polygon(0 0, 100% 0, 100% calc(100% - 6px), 88% calc(100% - 3px), 75% calc(100% - 2px), 50% 100%, 25% calc(100% - 2px), 12% calc(100% - 3px), 0 calc(100% - 6px)); }
.icon { width: 28px; height: 28px; }
.pin { width: 18px; height: 18px; flex: none; margin-left: auto; }
.pin svg { width: 18px; height: 18px; }

.tools { padding: 6px 7px 12px; border-right: 1px solid #24252b; }
.caption { position: relative; z-index: 1; display: flex; align-items: flex-start; height: 40px; padding: 2px 0 0 13px; background: #4a4d5b; }
.toolbox { width: 58px; height: 60px; margin-top: -3px; flex: none; }
.modes { display: grid; grid-template-columns: repeat(4, 45px); margin: -2px 0 0 9px; }
.modes button { width: 39px; height: 39px; justify-self: center; border: 1px solid transparent; }
.modes .selected { border-color: #ccced2; background: #3a404b; }
.mode-icon { width: 32px; height: 32px; }
.tool-well { display: flex; flex-direction: column; margin: 8px 3px 0 7px; padding: 11px 17px 15px 9px; }
.icon-grid { display: grid; grid-auto-rows: 35px; }
.seven { grid-template-columns: repeat(7, 35px); }
.five { grid-template-columns: repeat(5, 35px); margin: 3px 0 0 18px; }
.torch { align-self: flex-end; width: 30px; height: 30px; margin-top: 4px; }
.torch svg { width: 30px; height: 30px; }

.library { margin-top: 2px; padding: 5px 7px 10px; }
.library-head { background: linear-gradient(#4a4d5b, #4a4d5b) 0 0 / 281px 44px no-repeat, linear-gradient(#4a4d5b, #4a4d5b) 61px 44px / 212px 37px no-repeat, linear-gradient(#4a4d5b, #4a4d5b) 61px 86px / 216px 26px no-repeat; }
.library-top { display: flex; align-items: flex-start; height: 86px; padding-right: 1px; }
.cubes { width: 53px; padding-left: 9px; }
.cube { width: 44px; height: 47px; }
.mini-cube { margin: 8px 0 0 10px; }
.mini-cube svg { width: 24px; height: 24px; }
.filters { display: flex; align-items: flex-start; height: 26px; padding: 2px 3px 0 18px; }
.favourite { justify-content: flex-start; width: 56px; height: 20px; margin: 8px 11px 0 0; border: 1px solid #222; }
.favourite svg { flex: none; width: 24px; height: 24px; margin-left: -4px; }
.red { background: linear-gradient(#b91b20, #71060a); }
.green { background: linear-gradient(#72ae24, #2e6b08); }
.blue { background: linear-gradient(#183bc0, #05126e); }
.view svg { width: 20px; height: 20px; }
.view.rows { margin: 0 14px 0 3px; }
.view.rows svg { width: 22px; height: 24px; }
.list-well { display: flex; justify-content: space-between; margin: 8px 7px 0 10px; padding: 13px 18px 13px 15px; }
.objects { margin: 0; padding: 0; list-style: none; font-size: 15px; line-height: 17px; white-space: nowrap; }
.scroller { display: flex; flex-direction: column; width: 15px; height: 268px; background: #36374a; }
.scroller button { width: 15px; height: 15px; background: #2b3166; }
.scroller svg { width: 15px; height: 15px; }
.scroller button:last-child { margin-top: auto; }
.thumb { height: 28px; border: 1px solid #303463; background: linear-gradient(90deg, #2b2f5b, #191d45); }
.preview-well { height: 53px; margin: 8px 7px 0 10px; }

.options { margin-top: 5px; padding: 5px 6px 12px; }
.options .caption { height: 39px; padding: 3px 3px 0 8px; }
.document { width: 44px; height: 52px; margin-top: -3px; }
.surface-well { width: 216px; height: 88px; margin: 13px 0 0 38px; padding: 8px 0 0 15px; }
.option-row { display: flex; align-items: center; gap: 17px; height: 30px; }
.option-row.second { margin-top: 9px; }
.option { display: flex; align-items: center; gap: 6px; }
.wide { width: 30px; height: 28px; }
input[type="radio"] { appearance: none; width: 15px; height: 15px; flex: none; border: 3px solid #ececec; border-radius: 50%; background: transparent; }
input[type="radio"]:checked { background: radial-gradient(circle, #eee 2px, transparent 3px); }
.size-field { width: 65px; height: 25px; margin: 5px 0 0 -2px; padding: 0; border: 1px solid #555960; border-top: 2px solid #85888c; border-left-color: #85888c; background: transparent; }
.spread-well { margin: 6px 8px 0 9px; padding: 24px 16px 27px 14px; }
.scale-labels { display: grid; grid-template-columns: 98px 118px auto; align-items: end; height: 24px; }
.scale-labels svg { align-self: start; width: 28px; height: 16px; }
.slider { appearance: none; display: block; width: 229px; height: 28px; margin: 1px 0 0 7px; background: transparent; }
.slider::-webkit-slider-runnable-track { height: 22px; border: 1px solid #55575b; border-top: 2px solid #888a8e; border-left: 2px solid #888a8e; background: #000; }
.slider::-webkit-slider-thumb { appearance: none; width: 14px; height: 28px; margin-top: -5px; border: 0; background: #ff6a00; }
.jitter { display: flex; align-items: center; gap: 25px; height: 29px; margin-top: 8px; }
.jitter.lower { margin-top: 18px; }
.loose { gap: 16px; }
.combo { width: 29px; height: 29px; }
.auto { font-size: 16px; text-anchor: middle; fill: #ffd817; stroke: #d0a000; stroke-width: 1px; }
.number { height: 25px; padding: 0; border: 0; background: #000; color: #4a4a4a; text-align: right; }
.percent { width: 73px; margin-left: -9px; }
.metres { width: 104px; margin-left: -8px; }

.navigator { position: absolute; top: 0; left: 0; right: 0; width: 395px; margin: 0 auto; padding: 5px 6px 12px; background: linear-gradient(#4a4d5b, #4a4d5b) 6px 5px / 383px 39px no-repeat #35363f; }
.nav-top { display: flex; height: 75px; }
.nav-icons { width: 66px; padding-left: 2px; }
.compass { width: 58px; height: 56px; margin-top: -5px; }
.drop { width: 26px; height: 26px; }
.nav-icons button { margin: -2px 0 0 12px; }
.dial { width: 267px; height: 72px; margin-top: 3px; padding: 8px 26px; }
.dial-face { width: 215px; height: 56px; }
.nav-right { flex: 1; padding: 3px 4px 0 0; }
.locate { margin: 27px 0 0 10px; }
.locate svg { width: 26px; height: 26px; }
.coordinates { display: flex; align-items: center; height: 31px; margin-top: 6px; padding-left: 16px; }
.coordinates label { width: 43px; }
.coordinates .lon { width: 47px; margin-left: 24px; }
.coordinates input { width: 97px; height: 31px; padding: 0 3px; border: 0; background: #181e28; }
.coordinates button { width: 31px; height: 31px; margin-left: 14px; background: #181e28; }
.coordinates svg { width: 12px; height: 16px; }

.dock { flex: 1; display: flex; align-items: flex-end; justify-content: space-between; padding-left: 129px; }
.toolbar { display: flex; width: 424px; height: 84px; padding: 5px 6px 6px; background: #35363f; position: relative; }
.group { display: flex; align-items: center; background: #181e28; }
.group + .group { border-left: 2px solid #3f414b; }
.transforms { width: 158px; gap: 8px; padding-left: 12px; }
.t-move { width: 40px; height: 45px; }
.t-rotate { width: 36px; height: 42px; }
.t-scale { width: 34px; height: 36px; margin-left: 2px; }
.spaces { width: 95px; gap: 8px; padding-left: 9px; color: #2f8fe6; }
.t-earth { width: 33px; height: 33px; }
.t-house { width: 27px; height: 30px; }
.snaps { flex: 1; flex-direction: column; align-items: stretch; gap: 4px; padding: 3px 0 0 12px; }
.snap-row { display: flex; align-items: center; height: 25px; }
.snap { display: flex; align-items: center; gap: 8px; }
.snap svg { width: 24px; height: 22px; }
.degrees { font-size: 12px; fill: #c4b414; }
.version { font-size: 11px; fill: #c9b914; }
.angle-field { width: 25px; height: 25px; margin-left: 8px; padding: 0; border: 0; background: #000; text-align: right; }
.snap.lock { margin-left: 21px; gap: 6px; }
.snap.lock svg { width: 16px; height: 18px; margin-top: 8px; }
.snap.ts { margin-left: 18px; }
.run { position: relative; z-index: 1; display: flex; align-items: flex-end; width: 292px; height: 91px; margin-bottom: -6px; padding: 0 22px 0 18px; background: #35363f; }
.unlock { width: 46px; height: 31px; background: #181e28; }
.unlock svg { width: 26px; height: 24px; margin: 7px 0 0 9px; }
.start { width: 125px; height: 75px; margin-left: auto; background: #181e28; }
.start svg { width: 46px; height: 68px; margin: 17px 0 0 21px; }
.status { position: relative; display: flex; align-items: center; height: 30px; padding: 0 0 2px 119px; border-top: 6px solid #35363f; background: #181e28; }
.tile { width: 409px; }
</style>
